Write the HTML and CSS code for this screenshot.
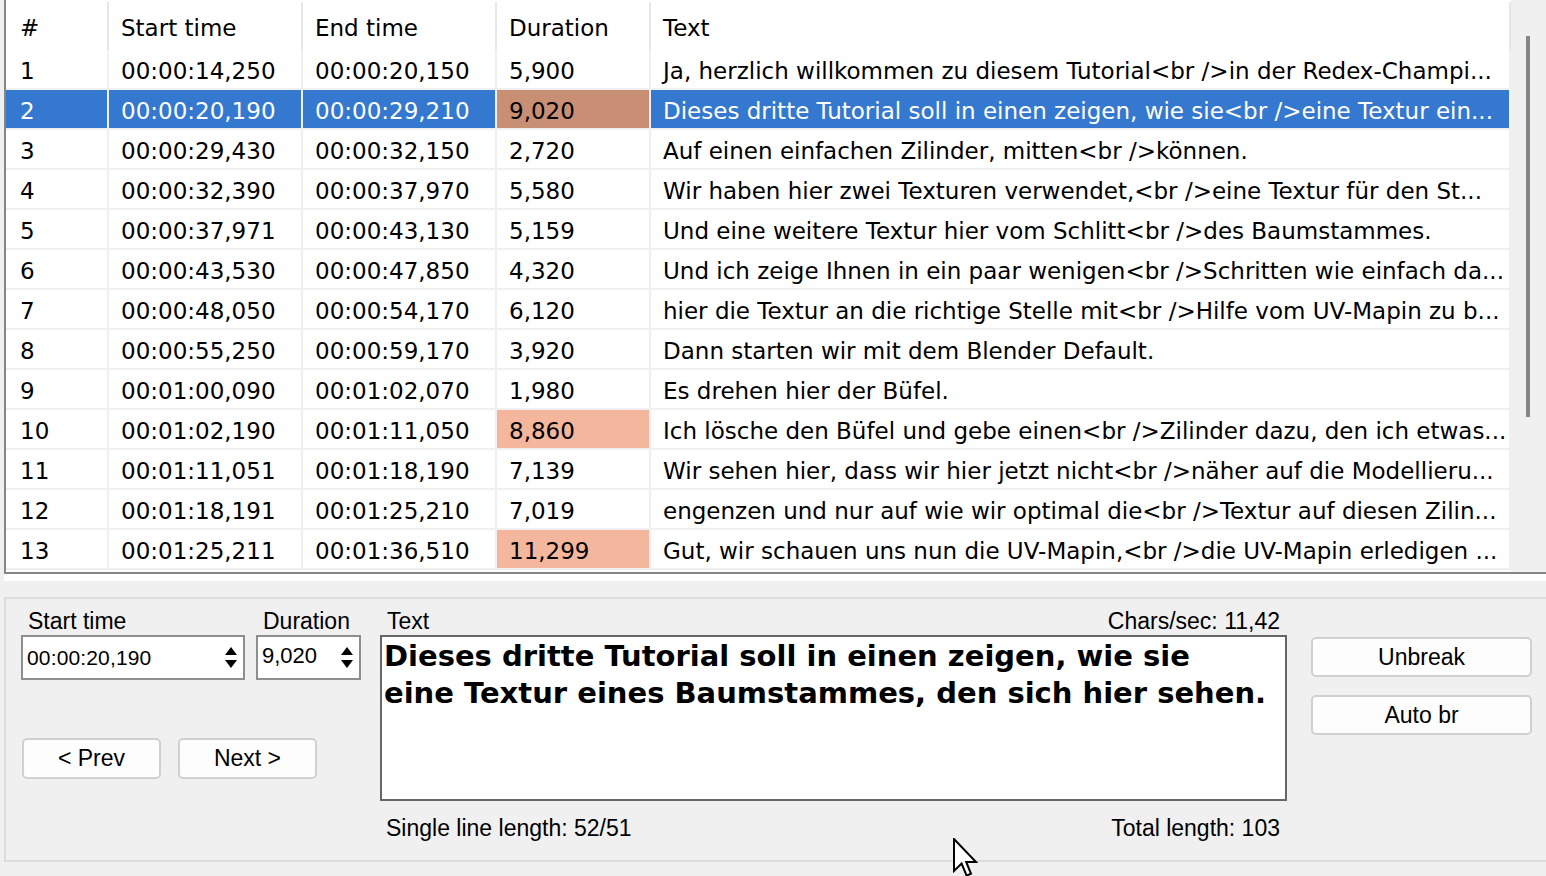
FILE: index.html
```html
<!DOCTYPE html>
<html>
<head>
<meta charset="utf-8">
<link rel="stylesheet" href="styles.css">
</head>
<body>
<div class="list">
  <div class="table">
    <div class="hrow">
      <div class="hcell first">#</div>
      <div class="hcell">Start time</div>
      <div class="hcell">End time</div>
      <div class="hcell">Duration</div>
      <div class="hcell">Text</div>
    </div>
    <div class="row"><div class="cell first">1</div><div class="cell">00:00:14,250</div><div class="cell">00:00:20,150</div><div class="cell">5,900</div><div class="cell">Ja, herzlich willkommen zu diesem Tutorial&lt;br /&gt;in der Redex-Champi...</div></div>
    <div class="row sel"><div class="cell first">2</div><div class="cell">00:00:20,190</div><div class="cell">00:00:29,210</div><div class="cell dur-sel">9,020</div><div class="cell">Dieses dritte Tutorial soll in einen zeigen, wie sie&lt;br /&gt;eine Textur ein...</div></div>
    <div class="row"><div class="cell first">3</div><div class="cell">00:00:29,430</div><div class="cell">00:00:32,150</div><div class="cell">2,720</div><div class="cell">Auf einen einfachen Zilinder, mitten&lt;br /&gt;können.</div></div>
    <div class="row"><div class="cell first">4</div><div class="cell">00:00:32,390</div><div class="cell">00:00:37,970</div><div class="cell">5,580</div><div class="cell">Wir haben hier zwei Texturen verwendet,&lt;br /&gt;eine Textur für den St...</div></div>
    <div class="row"><div class="cell first">5</div><div class="cell">00:00:37,971</div><div class="cell">00:00:43,130</div><div class="cell">5,159</div><div class="cell">Und eine weitere Textur hier vom Schlitt&lt;br /&gt;des Baumstammes.</div></div>
    <div class="row"><div class="cell first">6</div><div class="cell">00:00:43,530</div><div class="cell">00:00:47,850</div><div class="cell">4,320</div><div class="cell">Und ich zeige Ihnen in ein paar wenigen&lt;br /&gt;Schritten wie einfach da...</div></div>
    <div class="row"><div class="cell first">7</div><div class="cell">00:00:48,050</div><div class="cell">00:00:54,170</div><div class="cell">6,120</div><div class="cell">hier die Textur an die richtige Stelle mit&lt;br /&gt;Hilfe vom UV-Mapin zu b...</div></div>
    <div class="row"><div class="cell first">8</div><div class="cell">00:00:55,250</div><div class="cell">00:00:59,170</div><div class="cell">3,920</div><div class="cell">Dann starten wir mit dem Blender Default.</div></div>
    <div class="row"><div class="cell first">9</div><div class="cell">00:01:00,090</div><div class="cell">00:01:02,070</div><div class="cell">1,980</div><div class="cell">Es drehen hier der Büfel.</div></div>
    <div class="row"><div class="cell first">10</div><div class="cell">00:01:02,190</div><div class="cell">00:01:11,050</div><div class="cell dur-warn">8,860</div><div class="cell">Ich lösche den Büfel und gebe einen&lt;br /&gt;Zilinder dazu, den ich etwas...</div></div>
    <div class="row"><div class="cell first">11</div><div class="cell">00:01:11,051</div><div class="cell">00:01:18,190</div><div class="cell">7,139</div><div class="cell">Wir sehen hier, dass wir hier jetzt nicht&lt;br /&gt;näher auf die Modellieru...</div></div>
    <div class="row"><div class="cell first">12</div><div class="cell">00:01:18,191</div><div class="cell">00:01:25,210</div><div class="cell">7,019</div><div class="cell">engenzen und nur auf wie wir optimal die&lt;br /&gt;Textur auf diesen Zilin...</div></div>
    <div class="row"><div class="cell first">13</div><div class="cell">00:01:25,211</div><div class="cell">00:01:36,510</div><div class="cell dur-warn">11,299</div><div class="cell">Gut, wir schauen uns nun die UV-Mapin,&lt;br /&gt;die UV-Mapin erledigen ...</div></div>
  </div>
  <div class="vscroll"><div class="thumb"></div></div>
</div>
<div class="hstrip"></div>

<div class="group">
  <div class="colA">
    <div class="fields">
      <div class="field f1">
        <div class="lbl">Start time</div>
        <div class="spin"><span class="spintext">00:00:20,190</span>
          <svg class="arrows" width="16" height="26" viewBox="0 0 16 26"><path d="M2 10 L8 2 L14 10 Z M2 15 L14 15 L8 23 Z" fill="#000"/></svg>
        </div>
      </div>
      <div class="field f2">
        <div class="lbl">Duration</div>
        <div class="spin dur"><span class="spintext big">9,020</span>
          <svg class="arrows" width="16" height="26" viewBox="0 0 16 26"><path d="M2 10 L8 2 L14 10 Z M2 15 L14 15 L8 23 Z" fill="#000"/></svg>
        </div>
      </div>
    </div>
    <div class="nav">
      <div class="btn navbtn">&lt; Prev</div>
      <div class="btn navbtn">Next &gt;</div>
    </div>
  </div>
  <div class="colB">
    <div class="tlabels"><span>Text</span><span>Chars/sec: 11,42</span></div>
    <div class="textbox">Dieses dritte Tutorial soll in einen zeigen, wie sie<br>eine Textur eines Baumstammes, den sich hier sehen.</div>
    <div class="tfoot"><span>Single line length: 52/51</span><span>Total length: 103</span></div>
  </div>
  <div class="colC">
    <div class="btn sidebtn">Unbreak</div>
    <div class="btn sidebtn">Auto br</div>
  </div>
</div>

<svg class="cursor" width="26" height="40" viewBox="0 0 13 20"><path d="M0.5 0.5 L0.5 16.5 L4.3 12.8 L6.8 18.8 L9 17.9 L6.6 12 L11.5 12 Z" fill="#fff" stroke="#000" stroke-width="1" stroke-linejoin="miter"/></svg>
</body>
</html>
```
FILE: styles.css
```css
html, body {
  margin: 0;
  padding: 0;
}
body {
  background: #f0f0f0;
  width: 1546px;
  height: 876px;
  overflow: hidden;
  position: relative;
  font-family: "DejaVu Sans", sans-serif;
  color: #000;
}
.list {
  display: flex;
  margin-left: 4px;
  height: 572px;
  border-left: 2px solid #868686;
  border-bottom: 2px solid #868686;
  background: #fff;
}
.table {
  width: 1505px;
  font-size: 23px;
}
.hrow, .row {
  display: grid;
  grid-template-columns: 103px 194px 194px 154px 860px;
}
.hrow {
  height: 50px;
}
.hcell {
  margin-top: 2px;
  border-right: 2px solid #e6e6e6;
  padding: 3px 0 0 12px;
  display: flex;
  align-items: center;
  white-space: nowrap;
}
.row {
  height: 40px;
}
.cell {
  border-right: 2px solid #f0f0f0;
  border-bottom: 2px solid #f0f0f0;
  padding-left: 12px;
  line-height: 42px;
  white-space: nowrap;
  overflow: hidden;
}
.first {
  padding-left: 14px;
}
.sel .cell {
  background: #3478d0;
  color: #fff;
}
.sel .cell.dur-sel {
  background: #c98f75;
  color: #000;
}
.dur-warn {
  background: #f4b69c;
}
.vscroll {
  width: 35px;
  background: #f0f0f0;
}
.thumb {
  width: 4px;
  height: 381px;
  margin: 36px 0 0 15px;
  background: #858585;
}
.hstrip {
  height: 7px;
  margin-left: 4px;
  background: #fff;
}
.group {
  margin: 16px 0 0 4px;
  height: 265px;
  box-sizing: border-box;
  border: 2px solid #dcdcdc;
  border-right: none;
  padding: 9px 0 0 15px;
  display: flex;
  font-family: "Liberation Sans", Arial, sans-serif;
  font-size: 23px;
}
.colA {
  width: 340px;
  display: flex;
  flex-direction: column;
}
.fields {
  display: flex;
  gap: 11px;
}
.f1 { width: 224px; }
.f2 { width: 105px; }
.lbl {
  height: 26px;
  line-height: 26px;
  padding-left: 7px;
  white-space: nowrap;
}
.spin {
  margin-top: 1px;
  height: 45px;
  box-sizing: border-box;
  border: 2px solid #8e8e8e;
  background: #fff;
  display: flex;
  align-items: center;
  padding: 0 4px 0 4px;
}
.spintext {
  flex: 1;
  font-size: 21px;
  letter-spacing: 0.15px;
  white-space: nowrap;
}
.spin.dur {
  padding-left: 4px;
}
.spintext.big {
  font-size: 22px;
  letter-spacing: 0;
  margin-top: -4px;
}
.arrows {
  display: block;
}
.nav {
  margin-top: 58px;
  margin-left: 1px;
  display: flex;
  gap: 17px;
}
.btn {
  box-sizing: border-box;
  border: 2px solid #d0d0d0;
  border-radius: 5px;
  background: #fdfdfd;
  display: flex;
  align-items: center;
  justify-content: center;
  white-space: nowrap;
}
.navbtn {
  width: 139px;
  height: 41px;
}
.colB {
  width: 907px;
  margin-left: 19px;
}
.tlabels, .tfoot {
  height: 26px;
  line-height: 26px;
  display: flex;
  justify-content: space-between;
  padding: 0 7px;
  white-space: nowrap;
}
.textbox {
  margin-top: 1px;
  height: 166px;
  box-sizing: border-box;
  border: 2px solid #666;
  background: #fff;
  padding: 1px 2px;
  font-family: "DejaVu Sans", sans-serif;
  font-weight: bold;
  font-size: 29px;
  line-height: 37px;
  white-space: nowrap;
  overflow: hidden;
}
.tfoot {
  margin-top: 14px;
  padding-left: 6px;
}
.colC {
  width: 221px;
  margin-left: 24px;
  padding-top: 29px;
  display: flex;
  flex-direction: column;
  gap: 18px;
}
.sidebtn {
  height: 40px;
}
.cursor {
  position: absolute;
  left: 953px;
  top: 838px;
}
```
